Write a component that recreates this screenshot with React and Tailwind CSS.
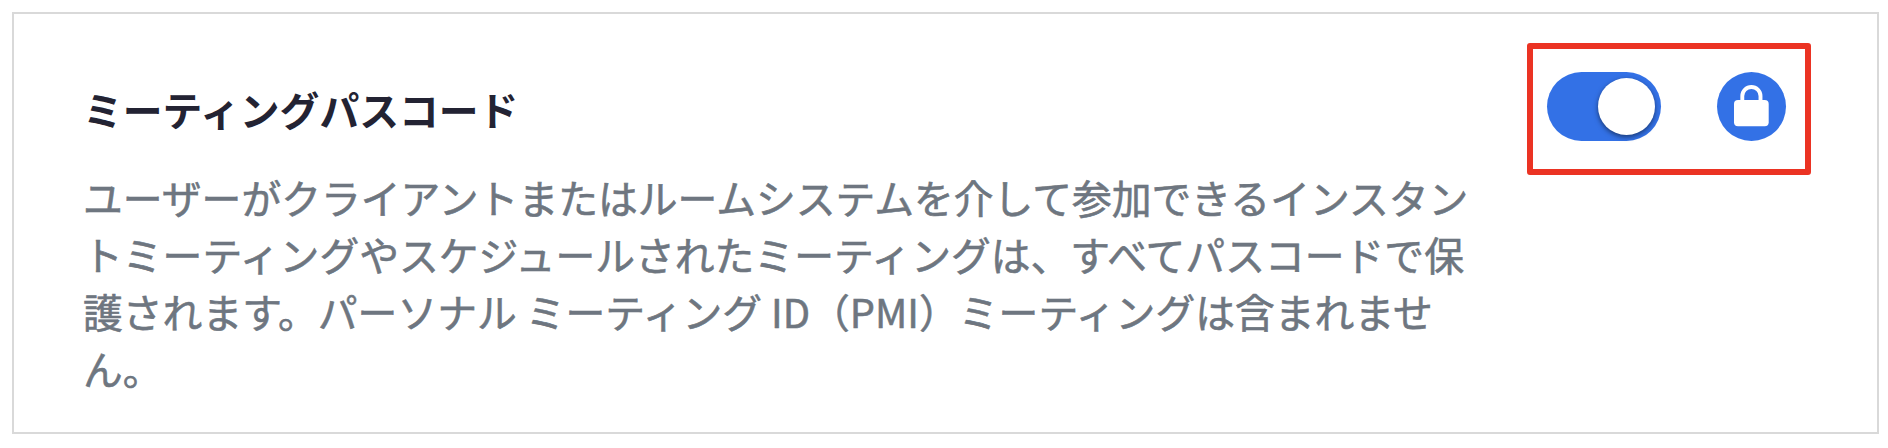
function LockIcon() {
  return (
    <svg className="h-[69px] w-[69px]" viewBox="0 0 69 69" fill="none" aria-hidden="true">
      <path d="M25.3 30V24.1a9.1 9.1 0 0 1 18.2 0V30" stroke="#fff" strokeWidth="3.9" />
      <rect x="17" y="28" width="34.7" height="26.2" rx="4" fill="#fff" />
    </svg>
  );
}

function Toggle() {
  return (
    <button
      type="button"
      role="switch"
      aria-checked="true"
      className="flex h-[69px] w-[114px] items-center justify-end rounded-full bg-[#3371e6] pr-1.5"
    >
      <span className="size-[57px] rounded-full bg-white shadow-[0_2px_5px_rgba(0,0,0,0.5)]" />
    </button>
  );
}

export default function App() {
  return (
    <main className="h-[448px] w-[1888px] bg-white pt-3 pl-3 font-['Noto_Sans_CJK_JP',sans-serif]">
      <section className="flex h-[422px] w-[1867px] items-start border-2 border-[#d9d9d9]">
        <div className="w-[1460px] pt-[66px] pl-[69px]">
          <h2 className="text-[39.8px] leading-[57px] font-bold text-[#232333]">ミーティングパスコード</h2>
          <p className="mt-[31px] text-[39.8px] leading-[57px] font-normal whitespace-nowrap text-[#6e7680] [-webkit-text-stroke:0.6px_#6e7680]">
            ユーザーがクライアントまたはルームシステムを介して参加できるインスタン
            <br />
            トミーティングやスケジュールされたミーティングは、すべてパスコードで保
            <br />
            護されます。パーソナル ミーティング ID（PMI）ミーティングは含まれませ
            <br />
            ん。
          </p>
        </div>
        <div className="mt-[29px] ml-[53px] flex h-[132px] w-[284px] items-start justify-between rounded-[3px] border-6 border-[#eb3323] pt-[23px] pr-[19px] pl-[14px]">
          <Toggle />
          <button type="button" className="size-[69px] rounded-full bg-[#3371e6]">
            <LockIcon />
          </button>
        </div>
      </section>
    </main>
  );
}
